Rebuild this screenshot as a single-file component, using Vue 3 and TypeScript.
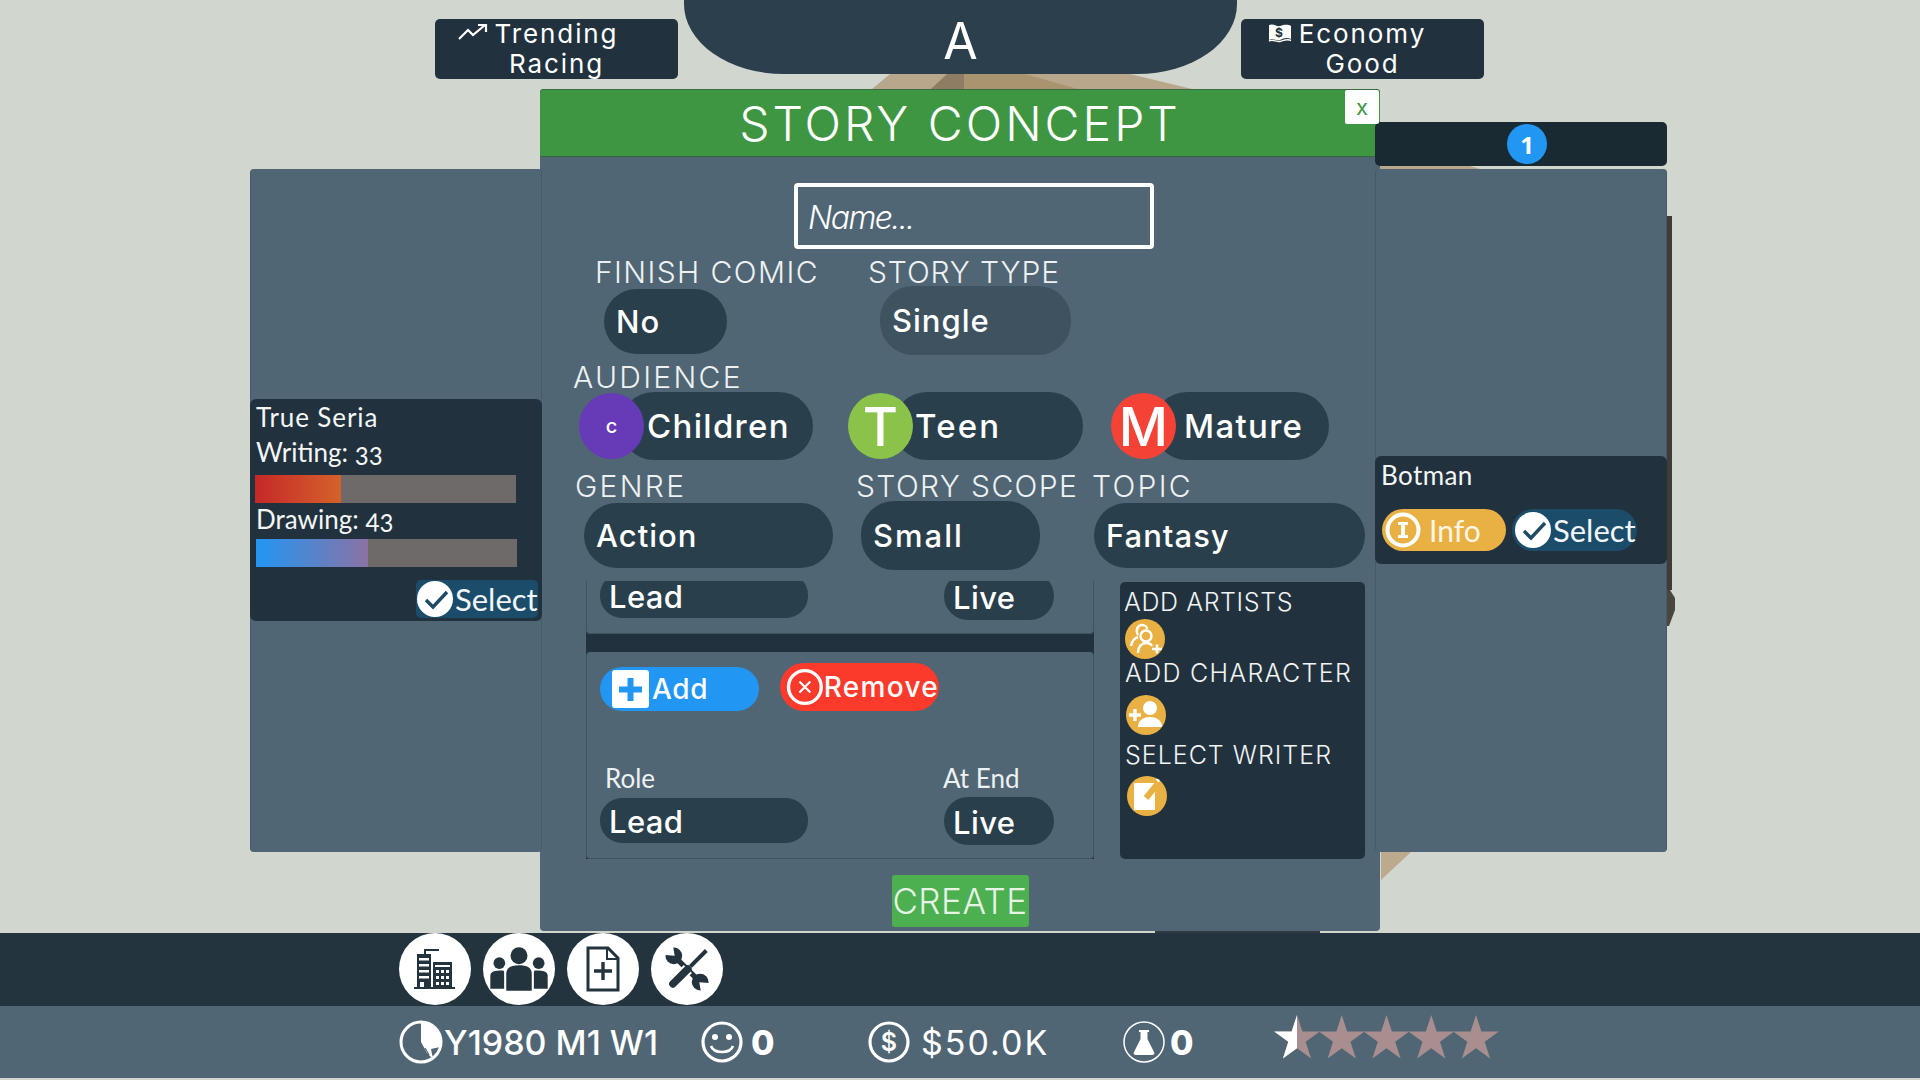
<script setup lang="ts">
interface RoleCard { role: string; end: string }
const roleCards: RoleCard[] = [
  { role: 'Lead', end: 'Live' },
  { role: 'Lead', end: 'Live' },
]
const audiences = [
  { letter: 'c', name: 'Children', color: '#673ab7', cls: 'aud-c' },
  { letter: 'T', name: 'Teen', color: '#8bc34a', cls: 'aud-t' },
  { letter: 'M', name: 'Mature', color: '#f44336', cls: 'aud-m' },
]
function starPoints(cx: number): string {
  const cy = 24
  const R = 24
  const r = R * 0.382
  const pts: string[] = []
  for (let i = 0; i < 10; i++) {
    const rad = i % 2 === 0 ? R : r
    const a = (Math.PI / 5) * i - Math.PI / 2
    pts.push(`${(cx + rad * Math.cos(a)).toFixed(2)},${(cy + rad * Math.sin(a)).toFixed(2)}`)
  }
  return pts.join(' ')
}
const stars = [0, 1, 2, 3, 4].map((i) => starPoints(23 + i * 44.75))
</script>

<template>
  <div class="stage">
    <svg class="decor" width="1920" height="1080" viewBox="0 0 1920 1080" aria-hidden="true">
      <polygon points="890,74 1130,74 1192,89 872,89" fill="#b9a78b" />
      <polygon points="947,74 964,74 964,89 931,89" fill="#8f7d63" />
      <polygon points="964,74 1025,74 1078,89 964,89" fill="#a8956f" />
      <polygon points="1380,166 1470,166 1480,169 1380,169" fill="#b9a78b" />
      <polygon points="1381,852 1411,852 1381,880" fill="#bda98c" />
      <rect x="1667" y="216" width="5" height="374" fill="#3d3c36" />
      <polygon points="1667,590 1670,590 1675,598 1675,610 1669,626 1667,626" fill="#48463d" />
      <rect x="1155" y="930" width="165" height="3" fill="#2f3a42" />
    </svg>

    <main class="world">
      <header class="hud">
        <div class="hud-box">
          <div class="hud-line">
            <svg class="hud-ico" width="30" height="18" viewBox="0 0 30 18">
              <path d="M1 16 L10 7 L15 12 L27 2 M20 2 H28 V9" fill="none" stroke="#fff" stroke-width="2.2" />
            </svg>
            <span>Trending</span>
          </div>
          <div class="hud-line">Racing</div>
        </div>
        <div class="dome">A</div>
        <div class="hud-box">
          <div class="hud-line">
            <svg class="hud-ico" width="24" height="20" viewBox="0 0 24 20">
              <path d="M1 2 C6 0 8 4 12 3 C16 2 19 1 23 3 V16 C19 14 16 15 12 17 C8 18 5 15 1 17 Z" fill="#fff" />
              <path d="M1 18 C5 16 8 19 12 18.500 C16 17.500 19 15.500 23 17.500" fill="none" stroke="#fff" stroke-width="1.400" />
              <text x="12" y="14" font-size="12" font-weight="700" text-anchor="middle" fill="#21323e" font-family="Inter, sans-serif">$</text>
            </svg>
            <span>Economy</span>
          </div>
          <div class="hud-line">Good</div>
        </div>
      </header>

      <section class="sides">
        <div class="side-col">
          <div class="side-panel left-panel">
            <div class="card worker">
              <div class="worker-line first">True Seria</div>
              <div class="worker-line writing">Writing: 33</div>
              <div class="bar bar-a"><div class="fill fill-a"></div></div>
              <div class="worker-line drawing">Drawing: 43</div>
              <div class="bar bar-b"><div class="fill fill-b"></div></div>
              <div class="select select-square">
                <svg width="36" height="36" viewBox="0 0 36 36"><circle cx="18" cy="18" r="18" fill="#fff" /><path d="M9 19 L16 26 L30 11" fill="none" stroke="#1f4a63" stroke-width="3.4" /></svg>
                <span>Select</span>
              </div>
            </div>
          </div>
        </div>

        <div class="side-col">
          <div class="count-bar"><span class="badge">1</span></div>
          <div class="side-panel right-panel">
            <div class="card botman">
              <div class="worker-line bot-name">Botman</div>
              <div class="bot-actions">
                <div class="pill-info">
                  <svg width="36" height="36" viewBox="0 0 36 36">
                    <circle cx="18" cy="18" r="15.5" fill="none" stroke="#fff" stroke-width="4" />
                    <path d="M13 10 H23 V13 H20 V23 H23 V26 H13 V23 H16 V13 H13 Z" fill="#fff" />
                  </svg>
                  <span>Info</span>
                </div>
                <div class="select select-round">
                  <svg width="36" height="36" viewBox="0 0 36 36"><circle cx="18" cy="18" r="18" fill="#fff" /><path d="M9 19 L16 26 L30 11" fill="none" stroke="#1f4a63" stroke-width="3.4" /></svg>
                  <span>Select</span>
                </div>
              </div>
            </div>
          </div>
        </div>
      </section>

      <div class="modal">
        <div class="modal-head">
          <h1>STORY CONCEPT</h1>
          <button class="close" type="button">x</button>
        </div>

        <input class="name-input" type="text" placeholder="Name..." />

        <div class="row row-one">
          <div class="field f-finish">
            <label class="lab">FINISH COMIC</label>
            <div class="pill p-no">No</div>
          </div>
          <div class="field f-type">
            <label class="lab lab-tight">STORY TYPE</label>
            <div class="pill p-single">Single</div>
          </div>
        </div>

        <label class="lab lab-wide lab-aud">AUDIENCE</label>
        <div class="row row-aud">
          <div v-for="a in audiences" :key="a.name" class="aud" :class="a.cls">
            <span class="aud-pill">{{ a.name }}</span>
            <span class="aud-dot" :style="{ background: a.color }">{{ a.letter }}</span>
          </div>
        </div>

        <div class="row row-genre">
          <div class="field f-genre">
            <label class="lab lab-wide">GENRE</label>
            <div class="pill p-genre">Action</div>
          </div>
          <div class="field f-scope">
            <label class="lab">STORY SCOPE</label>
            <div class="pill p-scope">Small</div>
          </div>
          <div class="field f-topic">
            <label class="lab lab-wide">TOPIC</label>
            <div class="pill p-topic">Fantasy</div>
          </div>
        </div>

        <div class="lower">
          <div class="roles">
            <div v-for="(c, i) in roleCards" :key="i" class="role-card">
              <div class="role-btns">
                <div class="btn-add">
                  <span class="add-ico">
                    <svg width="25" height="25" viewBox="0 0 25 25"><path d="M9.5 1 H15.5 V9.5 H24 V15.5 H15.5 V24 H9.5 V15.5 H1 V9.5 H9.5 Z" fill="#2196f3" /></svg>
                  </span>
                  <span>Add</span>
                </div>
                <div class="btn-remove">
                  <svg width="38" height="38" viewBox="0 0 38 38">
                    <circle cx="19" cy="19" r="16.5" fill="none" stroke="#fff" stroke-width="3.4" />
                    <path d="M13.5 13.5 L24.5 24.5 M24.5 13.5 L13.5 24.5" stroke="#fff" stroke-width="2.2" />
                  </svg>
                  <span>Remove</span>
                </div>
              </div>
              <div class="role-fields">
                <div class="rf rf-role">
                  <div class="rf-label">Role</div>
                  <div class="pill-sm lead">{{ c.role }}</div>
                </div>
                <div class="rf rf-end">
                  <div class="rf-label end-label">At End</div>
                  <div class="pill-sm live">{{ c.end }}</div>
                </div>
              </div>
            </div>
          </div>

          <aside class="adders">
            <div class="add-lab l1">ADD ARTISTS</div>
            <span class="y-ico i1">
              <svg width="40" height="40" viewBox="0 0 40 40">
                <g fill="none" stroke="#fff" stroke-width="2.4">
                  <path d="M13 16 C10 11 13 6 17 6 C20 6 22 8 22 10" />
                  <path d="M6 27 C7 21 10 19 13 18" />
                  <circle cx="21" cy="17" r="5.5" />
                  <path d="M13 34 C13 27 17 24 21 24 C24 24 26 25 27 27" />
                </g>
                <path d="M27 30 H37 M32 25.500 V34.500" stroke="#fff" stroke-width="2.6" />
              </svg>
            </span>
            <div class="add-lab l2">ADD CHARACTER</div>
            <span class="y-ico i2">
              <svg width="40" height="40" viewBox="0 0 40 40">
                <circle cx="24" cy="13" r="7" fill="#fff" />
                <path d="M12 32 C12 25 18 22 24 22 C30 22 36 25 36 32 Z" fill="#fff" />
                <path d="M3 20 H15 M9 14 V26" stroke="#fff" stroke-width="3.4" />
              </svg>
            </span>
            <div class="add-lab l3">SELECT WRITER</div>
            <span class="y-ico i3">
              <svg width="40" height="40" viewBox="0 0 40 40">
                <rect x="7" y="7" width="21" height="27" fill="#fff" />
                <path d="M19 22 L33 5" stroke="#e9b143" stroke-width="6" />
                <path d="M19 21 L29 9" stroke="#e9b143" stroke-width="2.5" />
                <path d="M30 5 L34 1" stroke="#fff" stroke-width="4" />
              </svg>
            </span>
          </aside>
        </div>

        <button class="create" type="button">CREATE</button>
      </div>
    </main>

    <nav class="tools">
      <span class="round">
        <svg width="48" height="48" viewBox="0 0 48 48" fill="#23343f">
          <path d="M13 4 H28 V6 H15 V9 H13 Z" />
          <path d="M6 9 H20 V42 H6 Z" />
          <path d="M8 13 H18 V15.500 H8 Z M8 19 H18 V21.500 H8 Z M8 25 H18 V27.500 H8 Z M8 31 H18 V33.500 H8 Z" fill="#fff" />
          <path d="M22 17 H41 V42 H22 Z" />
          <path d="M24 20 H39 V22 H24 Z" fill="#fff" />
          <g fill="#fff"><rect x="25" y="25" width="3" height="3" /><rect x="30" y="25" width="3" height="3" /><rect x="35" y="25" width="3" height="3" /><rect x="25" y="31" width="3" height="3" /><rect x="30" y="31" width="3" height="3" /><rect x="35" y="31" width="3" height="3" /><rect x="9" y="37" width="4" height="5" /><rect x="25" y="37" width="3" height="3" /><rect x="30" y="37" width="3" height="3" /><rect x="35" y="37" width="3" height="3" /></g>
          <path d="M3 42 H44 V44 H3 Z" />
        </svg>
      </span>
      <span class="round">
        <svg width="60" height="51" viewBox="0 0 56 48" fill="#23343f">
          <circle cx="28" cy="11" r="8" />
          <path d="M16 44 V28 C16 22 21 20 28 20 C35 20 40 22 40 28 V44 Z" />
          <circle cx="9.500" cy="18" r="5.500" />
          <path d="M1 42 V30 C1 26 5 25 12 25 C13 25 14 25.500 14 26 V42 Z" />
          <circle cx="46.500" cy="18" r="5.500" />
          <path d="M55 42 V30 C55 26 51 25 44 25 C43 25 42 25.500 42 26 V42 Z" />
        </svg>
      </span>
      <span class="round">
        <svg width="38" height="48" viewBox="0 0 38 48">
          <path d="M4 3 H24 L34 13 V45 H4 Z" fill="none" stroke="#23343f" stroke-width="3" />
          <path d="M23 3 V14 H34" fill="none" stroke="#23343f" stroke-width="2" />
          <path d="M19 17 V35 M10 26 H28" stroke="#23343f" stroke-width="3.400" />
        </svg>
      </span>
      <span class="round">
        <svg width="44" height="48" viewBox="0 0 50 50">
          <g fill="#23343f">
            <circle cx="10" cy="10" r="9.500" />
            <circle cx="40" cy="40" r="9.500" />
          </g>
          <path d="M12 12 L38 38" stroke="#23343f" stroke-width="6" />
          <path d="M-2 -2 L9 -2 L11 10 L-2 9 Z M52 52 L41 52 L39 40 L52 41 Z" fill="#fff" />
          <path d="M47 4 L29 22" stroke="#fff" stroke-width="9" />
          <path d="M47 4 L29 22" stroke="#23343f" stroke-width="4.500" />
          <path d="M26 25 L9 42" stroke="#fff" stroke-width="13" />
          <path d="M26 25 L9 42" stroke="#23343f" stroke-width="8.500" stroke-linecap="round" />
        </svg>
      </span>
    </nav>

    <footer class="stats">
      <div class="stat s-date">
        <svg width="44" height="44" viewBox="0 0 44 44">
          <circle cx="22" cy="22" r="20" fill="none" stroke="#fff" stroke-width="3" />
          <path d="M22 2 A20 20 0 0 1 41 27 L32 29 L34 39 L28 33 L22 22 Z" fill="#fff" />
          <path d="M26 28 L30 35" stroke="#506675" stroke-width="1.200" />
        </svg>
        <span class="stat-text date">Y1980 M1 W1</span>
      </div>
      <div class="stat s-fans">
        <svg width="42" height="42" viewBox="0 0 42 42">
          <circle cx="21" cy="21" r="19" fill="none" stroke="#fff" stroke-width="3.200" />
          <circle cx="14" cy="16" r="3" fill="#fff" />
          <circle cx="28" cy="16" r="3" fill="#fff" />
          <path d="M10 25 C13 33 29 33 32 25" fill="none" stroke="#fff" stroke-width="2.600" />
        </svg>
        <span class="stat-text bold">0</span>
      </div>
      <div class="stat s-money">
        <svg width="42" height="42" viewBox="0 0 42 42">
          <circle cx="21" cy="21" r="19" fill="none" stroke="#fff" stroke-width="3.200" />
          <text x="21" y="30" font-size="25" font-weight="600" text-anchor="middle" fill="#fff" font-family="Inter, sans-serif">$</text>
        </svg>
        <span class="stat-text money">$50.0K</span>
      </div>
      <div class="stat s-lab">
        <svg width="42" height="42" viewBox="0 0 42 42">
          <circle cx="21" cy="21" r="20" fill="none" stroke="#fff" stroke-width="1.500" />
          <path d="M16 9 H26 V11 H24.500 V18 L31 31 C32 33 31 34 29 34 H13 C11 34 10 33 11 31 L17.500 18 V11 H16 Z" fill="#fff" />
        </svg>
        <span class="stat-text bold">0</span>
      </div>
      <svg class="stars" width="228" height="48" viewBox="0 0 228 48">
        <defs><clipPath id="halfStar"><rect x="0" y="0" width="23" height="48" /></clipPath></defs>
        <polygon v-for="(p, i) in stars" :key="i" :points="p" fill="#a88e8e" />
        <polygon :points="stars[0]" fill="#fff" clip-path="url(#halfStar)" />
      </svg>
    </footer>
  </div>
</template>

<style scoped>
.stage {
  --ui: "Inter", "Noto Sans", sans-serif;
  --body: "Lato", "Open Sans", sans-serif;
  --panel: #506675;
  --card: #21323e;
  --pill: #2a3f4c;
  --edge: #465b69;
  position: relative;
  width: 1920px;
  height: 1080px;
  overflow: hidden;
  background: #d1d6cf;
  color: #fff;
  font-family: var(--ui);
}
.decor { position: absolute; left: 0; top: 0; }

.world { position: relative; height: 933px; }

/* top HUD */
.hud { position: relative; display: flex; justify-content: center; align-items: flex-start; height: 79px; padding-right: 1px; }
.hud-box {
  width: 243px; height: 60px; margin-top: 19px; background: var(--card); border-radius: 5px;
  display: flex; flex-direction: column; align-items: center;
  font-size: 26px; letter-spacing: 1.9px; font-weight: 400;
}
.hud-line { position: relative; height: 30px; line-height: 30px; white-space: nowrap; }
.hud-ico { position: absolute; right: 100%; top: 4px; margin-right: 7px; }
.dome {
  width: 553px; height: 74px; margin: 0 4px 0 6px; background: #2b3f4d;
  border-radius: 0 0 100px 100px / 0 0 70px 70px;
  display: flex; align-items: center; justify-content: center;
  font-size: 50px; font-weight: 400; padding-top: 8px; box-sizing: border-box;
}

/* side panels */
.sides { display: flex; justify-content: space-between; margin-top: 43px; padding: 0 253px 0 250px; }
.side-col { position: relative; z-index: 2; display: flex; flex-direction: column; width: 292px; }
.side-col:first-child { padding-top: 47px; }
.side-panel {
  height: 683px; background: var(--panel); border: 1px solid var(--edge); border-width: 0 1px;
  border-radius: 4px; box-sizing: border-box;
}
.left-panel { padding-top: 230px; }
.right-panel { padding-top: 287px; }
.count-bar {
  height: 44px; margin-bottom: 3px; padding-left: 12px; background: #1a2a33; border-radius: 5px;
  display: flex; justify-content: center; align-items: center; box-sizing: border-box;
}
.badge {
  width: 40px; height: 40px; border-radius: 50%; background: #2196f3; text-align: center;
  font: 700 24px/42px "Noto Sans", sans-serif;
}
.card { margin: 0 -1px; background: var(--card); border-radius: 6px; box-sizing: border-box; }
.worker { height: 222px; padding-top: 3px; display: flex; flex-direction: column; }
.worker-line {
  font-family: var(--body); font-size: 26px; line-height: 30px; padding-left: 6px; color: #f4f6f6;
  font-variant-numeric: oldstyle-nums; white-space: nowrap;
}
.worker-line.first { letter-spacing: 0.9px; }
.worker-line.writing { margin-top: 5px; }
.worker-line.drawing { margin-top: 1px; }
.worker-line.bot-name { letter-spacing: 0.4px; }
.bar { height: 28px; width: 261px; background: #6e6a69; }
.bar-a { margin: 8px 0 0 5px; }
.bar-b { margin: 5px 0 0 6px; }
.fill { height: 100%; }
.fill-a { width: 86px; background: linear-gradient(90deg, #c62828, #d4622a); }
.fill-b { width: 112px; background: linear-gradient(90deg, #2196f3, #8a72a5); }
.select {
  display: flex; align-items: center; gap: 2px; background: #1b4d6b; box-sizing: border-box;
  font-family: var(--body); font-size: 31px; color: #f2f6f8; white-space: nowrap;
}
.select-square {
  width: 122px; height: 38px; margin: 13px 4px 0 auto; padding-left: 1px; border-radius: 5px; flex-shrink: 0;
}
.select-round { width: 125px; height: 42px; padding-left: 3px; border-radius: 21px; }
.botman { height: 108px; padding-top: 4px; }
.bot-actions { display: flex; gap: 6px; margin: 19px 0 0 7px; }
.pill-info {
  display: flex; align-items: center; gap: 8px; width: 124px; height: 42px; padding-left: 3px; box-sizing: border-box;
  background: #e9b143; border-radius: 21px; font-family: var(--body); font-size: 30px; color: #fdf6e6;
}

/* modal */
.modal {
  position: absolute; left: 540px; top: 89px; width: 840px; height: 842px;
  background: var(--panel); border-radius: 4px; display: flex; flex-direction: column;
}
.modal-head {
  flex: none; height: 67px; padding-top: 2px; box-sizing: border-box;
  background: #3f9642; border-radius: 4px 4px 0 0;
  box-shadow: inset 0 1px 0 #3a6b44, 0 1px 0 #38633f;
  display: flex; justify-content: center; align-items: center;
}
.modal-head h1 {
  margin: 0; font-size: 48px; font-weight: 300; letter-spacing: 3px; white-space: nowrap;
}
.close {
  position: absolute; z-index: 3; right: 1px; top: 1px; width: 34px; height: 34px; padding: 0; border: 0;
  background: #fff; color: #3f9642; border-radius: 2px; font: 400 22px/30px var(--ui);
}
.name-input {
  flex: none; width: 360px; height: 66px; margin: 27px 0 0 254px; padding: 2px 0 0 10px; box-sizing: border-box;
  border: 4px solid #fff; border-radius: 4px; background: transparent; outline: none;
  color: #fff; font: italic 300 32px var(--ui); letter-spacing: -1.6px;
}
.name-input::placeholder { color: #fff; opacity: 1; }

.lab {
  display: block; font-size: 30px; line-height: 33px; font-weight: 300; letter-spacing: 1.4px;
  color: #eef1f2; white-space: nowrap;
}
.lab-tight { letter-spacing: 0.9px; }
.lab-wide { letter-spacing: 2.3px; }
.row { display: flex; }
.field { display: flex; flex-direction: column; }
.pill {
  display: flex; align-items: center; padding-left: 12px; box-sizing: border-box;
  background: var(--pill); border-radius: 33px;
  font-size: 31px; font-weight: 500; letter-spacing: 1px; white-space: nowrap;
}
.row-one { margin-top: 7px; height: 99px; padding-left: 55px; }
.f-finish { width: 273px; }
.p-no { width: 123px; height: 65px; margin-left: 9px; }
.p-single { width: 191px; height: 69px; margin: -3px 0 0 12px; background: #3e5260; }

.lab-aud { margin: 6px 0 0 33px; height: 31px; }
.row-aud { height: 68px; padding-left: 39px; }
.aud { position: relative; display: flex; align-items: center; height: 68px; }
.aud-c { width: 269px; }
.aud-t { width: 263px; }
.aud-m { width: 218px; }
.aud-pill {
  display: flex; align-items: center; height: 68px; box-sizing: border-box; background: var(--pill); border-radius: 34px;
  font-size: 33px; font-weight: 500; letter-spacing: 1.3px; white-space: nowrap;
}
.aud-c .aud-pill { margin-left: 41px; width: 193px; padding-left: 27px; }
.aud-t .aud-pill { margin-left: 45px; width: 190px; padding-left: 22px; letter-spacing: 2.2px; }
.aud-m .aud-pill { margin-left: 42px; width: 176px; padding-left: 31px; }
.aud-dot {
  position: absolute; left: 0; top: 1px; width: 65px; height: 66px; border-radius: 50%;
  display: flex; align-items: center; justify-content: center; font-size: 54px; font-weight: 500;
}
.aud-c .aud-dot { font-size: 20px; font-weight: 500; }

.row-genre { margin-top: 10px; height: 100px; padding-left: 35px; }
.f-genre { width: 281px; }
.f-scope { width: 236px; }
.p-genre { width: 249px; height: 65px; margin-left: 9px; }
.p-scope { width: 179px; height: 69px; margin: -2px 0 0 5px; letter-spacing: 2px; }
.p-topic { width: 271px; height: 65px; margin-left: 2px; }

.lower { display: flex; height: 278px; margin: 11px 0 0 46px; gap: 26px; }
.roles {
  width: 508px; flex: none; overflow: hidden; background: var(--card);
  display: flex; flex-direction: column; justify-content: flex-end; gap: 18px;
}
.role-card {
  flex: none; height: 207px; background: var(--panel); border: 1px solid #3f5361; border-top: 0;
  border-radius: 4px; box-sizing: border-box; padding: 11px 0 0 13px;
}
.role-btns { display: flex; align-items: flex-end; gap: 21px; height: 48px; }
.btn-add, .btn-remove {
  display: flex; align-items: center; width: 159px; box-sizing: border-box; font-size: 28px; font-weight: 500;
  letter-spacing: 0.7px; white-space: nowrap;
}
.btn-add { height: 44px; background: #2196f3; border-radius: 22px; padding-left: 12px; gap: 3px; }
.add-ico {
  width: 37px; height: 38px; background: #fff; border-radius: 3px;
  display: flex; align-items: center; justify-content: center;
}
.btn-remove { height: 48px; background: #fb3a2c; border-radius: 24px; padding-left: 6px; gap: 0; letter-spacing: 1.3px; }
.role-fields { display: flex; margin-top: 53px; }
.rf-role { width: 344px; }
.rf-label { height: 34px; line-height: 28px; padding-left: 5px; font-size: 26px; color: #eef1f2; font-family: var(--body); }
.end-label { padding-left: 0; margin-left: -1px; }
.pill-sm {
  display: flex; align-items: center; padding: 2px 0 0 9px; box-sizing: border-box; background: var(--pill);
  font-size: 31px; font-weight: 500; letter-spacing: 0.4px;
}
.lead { width: 208px; height: 45px; border-radius: 22px; }
.live { width: 110px; height: 48px; margin-top: -1px; border-radius: 24px; }

.adders {
  width: 245px; flex: none; margin-top: 1px; padding: 5px 0 0 4px; box-sizing: border-box;
  background: var(--card); border-radius: 5px; display: flex; flex-direction: column; align-items: flex-start;
}
.add-lab { height: 30px; line-height: 30px; font-size: 25px; font-weight: 300; white-space: nowrap; color: #f1f3f4; }
.y-ico { width: 40px; height: 40px; border-radius: 50%; background: #e9b143; display: block; overflow: hidden; }
.y-ico svg { display: block; }
.l1 { letter-spacing: 0.6px; }
.i1 { margin: 2px 0 0 1px; }
.l2 { margin: -1px 0 0 1px; letter-spacing: 1.3px; }
.i2 { margin: 7px 0 0 2px; }
.l3 { margin: 5px 0 0 1px; letter-spacing: 1px; }
.i3 { margin: 6px 0 0 3px; }

.create {
  flex: none; align-self: center; width: 137px; height: 52px; margin-top: 16px; padding: 0; border: 0;
  background: #4caf50; border-radius: 3px; color: #e6f3e6; overflow: hidden;
  font: 300 35px/52px var(--ui); letter-spacing: 0.5px; white-space: nowrap;
}

/* bottom bars */
.tools { display: flex; gap: 12px; height: 73px; padding-left: 399px; background: #23343f; box-sizing: border-box; }
.round {
  width: 72px; height: 72px; border-radius: 50%; background: #fff;
  display: flex; align-items: center; justify-content: center;
}
.stats {
  display: flex; align-items: center; height: 72px; padding-left: 399px; background: var(--panel);
  box-sizing: border-box;
}
.stat { display: flex; align-items: center; flex: none; }
.s-date { width: 302px; gap: 1px; }
.s-fans { width: 167px; gap: 8px; }
.s-money { width: 255px; gap: 11px; }
.s-lab { width: 151px; gap: 5px; }
.stat-text { font-size: 34px; white-space: nowrap; }
.stat-text.date { font-weight: 500; }
.stat-text.money { font-weight: 400; letter-spacing: 2px; }
.stat-text.bold { font-weight: 800; }
.stars { flex: none; margin-top: -6px; }
</style>
